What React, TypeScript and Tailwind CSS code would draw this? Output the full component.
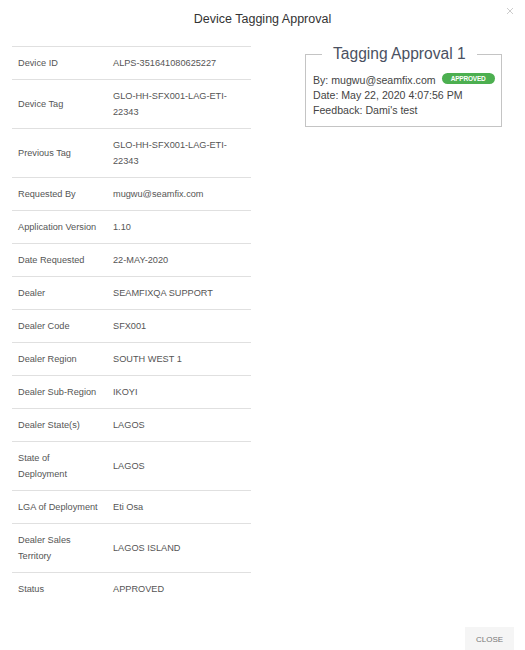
import React from "react";

type Row = { label: string; value: string };

const rows: Row[] = [
  { label: "Device ID", value: "ALPS-351641080625227" },
  { label: "Device Tag", value: "GLO-HH-SFX001-LAG-ETI-22343" },
  { label: "Previous Tag", value: "GLO-HH-SFX001-LAG-ETI-22343" },
  { label: "Requested By", value: "mugwu@seamfix.com" },
  { label: "Application Version", value: "1.10" },
  { label: "Date Requested", value: "22-MAY-2020" },
  { label: "Dealer", value: "SEAMFIXQA SUPPORT" },
  { label: "Dealer Code", value: "SFX001" },
  { label: "Dealer Region", value: "SOUTH WEST 1" },
  { label: "Dealer Sub-Region", value: "IKOYI" },
  { label: "Dealer State(s)", value: "LAGOS" },
  { label: "State of Deployment", value: "LAGOS" },
  { label: "LGA of Deployment", value: "Eti Osa" },
  { label: "Dealer Sales Territory", value: "LAGOS ISLAND" },
  { label: "Status", value: "APPROVED" },
];

const App = () => {
  return (
    <div className="w-[525px] h-[650px] overflow-hidden bg-white font-['Liberation_Sans',Arial,sans-serif] relative flex flex-col">
      {/* header */}
      <div className="h-[38px] flex items-center justify-center shrink-0">
        <h1 className="text-[12.5px] text-[#333] leading-none">Device Tagging Approval</h1>
      </div>
      <button className="absolute top-[7px] right-[11px] w-[8px] h-[8px] text-[#ccc]" aria-label="close">
        <svg viewBox="0 0 8 8" width="8" height="8" fill="none" stroke="currentColor" strokeWidth="1">
          <path d="M1 1 L7 7 M7 1 L1 7" />
        </svg>
      </button>

      {/* body */}
      <main className="flex-1 flex items-start px-[12px] pt-[8px]">
        <table className="w-[239px] table-fixed border-collapse text-[9.2px] leading-[16px] text-[#555]">
          <tbody>
            {rows.map((r) => (
              <tr key={r.label} className="border-t border-[#e0e0e0]">
                <td className="w-[101px] pl-[6px] pr-[13px] py-[8px] align-middle">{r.label}</td>
                <td className="pr-[10px] py-[8px] align-middle">{r.value}</td>
              </tr>
            ))}
          </tbody>
        </table>

        <fieldset className="ml-[54px] w-[197px] border border-[#c4c4c4] pl-[7px] pr-[6px] pt-[10px] pb-[8px] -mt-[1px]">
          <legend className="ml-[9px] px-[11px] text-[15.6px] leading-[18px] text-[#4a5162]">
            Tagging Approval 1
          </legend>
          <div className="text-[10.6px] leading-[15px] text-[#444]">
            <div className="flex items-center">
              <span>By: mugwu@seamfix.com</span>
              <span className="ml-[6px] -mt-[4px] h-[11px] w-[53px] rounded-full bg-[#4caf50] text-white text-[6.5px] font-bold leading-[11px] text-center tracking-[-0.2px]">
                APPROVED
              </span>
            </div>
            <div>Date: May 22, 2020 4:07:56 PM</div>
            <div>Feedback: Dami's test</div>
          </div>
        </fieldset>
      </main>

      {/* footer */}
      <div className="flex justify-end pr-[11px] shrink-0 -mb-[3px]">
        <button className="w-[49px] h-[26px] bg-[#f5f5f5] text-[8px] text-[#777] leading-none">CLOSE</button>
      </div>
    </div>
  );
};

export default App;
